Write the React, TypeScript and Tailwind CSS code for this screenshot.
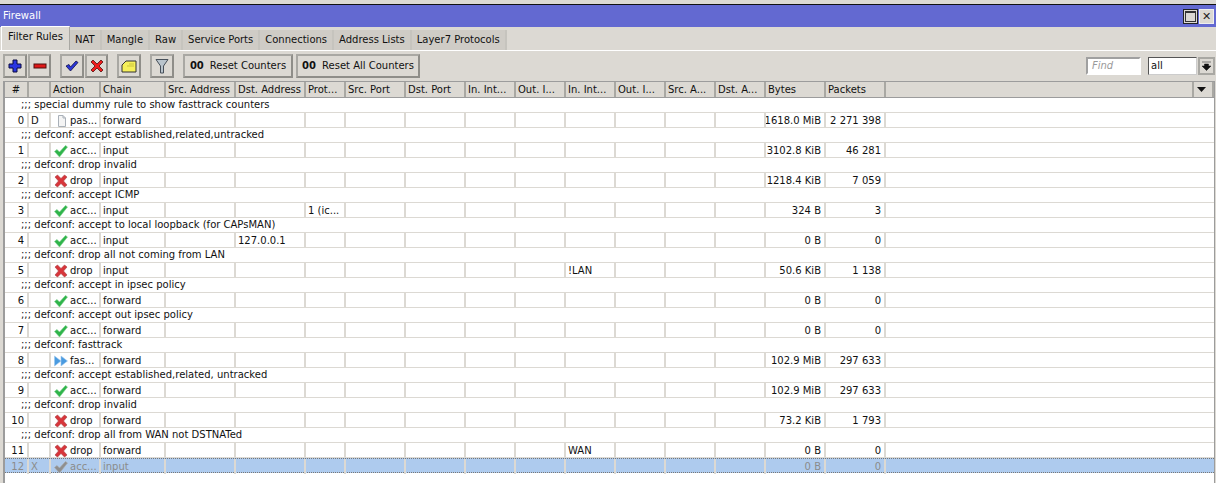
import type { ReactNode } from 'react';

const cols = 'grid grid-cols-[24px_22px_50px_65px_70px_70px_40px_60px_60px_50px_50px_50px_50px_50px_50px_60px_60px_1fr]';

const Accept = ({ gray }: { gray?: boolean }) => (
  <svg width="16" height="14" viewBox="0 0 16 14" className="shrink-0">
    <path d="M1.5 7.5 L4 5.5 L6.5 8 L12.5 1.5 L14.5 3 L6.5 13 Z" fill={gray ? '#8f8f8f' : '#2fb44a'} stroke={gray ? '#a8a8a8' : '#7ccf8a'} strokeWidth="0.6" />
  </svg>
);

const Drop = () => (
  <svg width="16" height="14" viewBox="0 0 16 14" className="shrink-0">
    <path d="M2 3 L4.5 1 L8 4.5 L11.5 1 L14 3 L10.5 7 L14 11 L11.5 13 L8 9.5 L4.5 13 L2 11 L5.5 7 Z" fill="#d8353a" stroke="#a83a3e" strokeWidth="0.6" />
  </svg>
);

const Passthrough = () => (
  <svg width="16" height="14" viewBox="0 0 16 14" className="shrink-0">
    <path d="M5.5 1.5 H10 L12.5 4 V12.5 H5.5 Z" fill="#f4f4f4" stroke="#a9b0b8" />
    <path d="M10 1.5 V4 H12.5" fill="none" stroke="#a9b0b8" />
  </svg>
);

const FastTrack = () => (
  <svg width="16" height="14" viewBox="0 0 16 14" className="shrink-0">
    <path d="M1.5 2 L8 7 L1.5 12 Z" fill="#4a9be0" stroke="#9cc8ee" strokeWidth="0.6" />
    <path d="M8 2 L14.5 7 L8 12 Z" fill="#4a9be0" stroke="#9cc8ee" strokeWidth="0.6" />
  </svg>
);

type Rule = {
  comment: string;
  id: number;
  flag?: string;
  icon: ReactNode;
  action: string;
  chain: string;
  dst?: string;
  proto?: string;
  inIf?: string;
  bytes: string;
  packets: string;
};

const rules: Rule[] = [
  { comment: 'special dummy rule to show fasttrack counters', id: 0, flag: 'D', icon: <Passthrough />, action: 'pas...', chain: 'forward', bytes: '1618.0 MiB', packets: '2 271 398' },
  { comment: 'defconf: accept established,related,untracked', id: 1, icon: <Accept />, action: 'acc...', chain: 'input', bytes: '3102.8 KiB', packets: '46 281' },
  { comment: 'defconf: drop invalid', id: 2, icon: <Drop />, action: 'drop', chain: 'input', bytes: '1218.4 KiB', packets: '7 059' },
  { comment: 'defconf: accept ICMP', id: 3, icon: <Accept />, action: 'acc...', chain: 'input', proto: '1 (ic...', bytes: '324 B', packets: '3' },
  { comment: 'defconf: accept to local loopback (for CAPsMAN)', id: 4, icon: <Accept />, action: 'acc...', chain: 'input', dst: '127.0.0.1', bytes: '0 B', packets: '0' },
  { comment: 'defconf: drop all not coming from LAN', id: 5, icon: <Drop />, action: 'drop', chain: 'input', inIf: '!LAN', bytes: '50.6 KiB', packets: '1 138' },
  { comment: 'defconf: accept in ipsec policy', id: 6, icon: <Accept />, action: 'acc...', chain: 'forward', bytes: '0 B', packets: '0' },
  { comment: 'defconf: accept out ipsec policy', id: 7, icon: <Accept />, action: 'acc...', chain: 'forward', bytes: '0 B', packets: '0' },
  { comment: 'defconf: fasttrack', id: 8, icon: <FastTrack />, action: 'fas...', chain: 'forward', bytes: '102.9 MiB', packets: '297 633' },
  { comment: 'defconf: accept established,related, untracked', id: 9, icon: <Accept />, action: 'acc...', chain: 'forward', bytes: '102.9 MiB', packets: '297 633' },
  { comment: 'defconf: drop invalid', id: 10, icon: <Drop />, action: 'drop', chain: 'forward', bytes: '73.2 KiB', packets: '1 793' },
  { comment: 'defconf: drop all from WAN not DSTNATed', id: 11, icon: <Drop />, action: 'drop', chain: 'forward', inIf: 'WAN', bytes: '0 B', packets: '0' },
];

const headers = ['#', '', 'Action', 'Chain', 'Src. Address', 'Dst. Address', 'Prot...', 'Src. Port', 'Dst. Port', 'In. Int...', 'Out. I...', 'In. Int...', 'Out. I...', 'Src. A...', 'Dst. A...', 'Bytes', 'Packets', ''];

const tabs = ['NAT', 'Mangle', 'Raw', 'Service Ports', 'Connections', 'Address Lists', 'Layer7 Protocols'];

const ToolButton = ({ children, className }: { children: ReactNode; className?: string }) => (
  <div className={`flex h-[24px] items-center justify-center border-2 border-[#a9a8a3] border-r-[#8f8e89] border-b-[#8f8e89] ${className ?? ''}`}>{children}</div>
);

const Cell = ({ children, right, className }: { children?: ReactNode; right?: boolean; className?: string }) => (
  <div className={`flex h-[15px] items-center overflow-hidden whitespace-nowrap border-r-2 border-[#dcd9d3] px-[2px] ${right ? 'justify-end pr-[3px]' : ''} ${className ?? ''}`}>{children}</div>
);

const RuleCells = ({ id, flag, icon, action, chain, dst, proto, inIf, bytes, packets }: Omit<Rule, 'comment'>) => (
  <>
    <Cell right>{id}</Cell>
    <Cell>{flag}</Cell>
    <Cell className="gap-[1px] pl-[2px]">{icon}{action}</Cell>
    <Cell>{chain}</Cell>
    <Cell />
    <Cell>{dst}</Cell>
    <Cell>{proto}</Cell>
    <Cell />
    <Cell />
    <Cell />
    <Cell />
    <Cell>{inIf}</Cell>
    <Cell />
    <Cell />
    <Cell />
    <Cell right>{bytes}</Cell>
    <Cell right>{packets}</Cell>
    <div />
  </>
);

export default function App() {
  return (
    <div className="h-[483px] w-[1216px] overflow-hidden bg-[#dcd9d3] font-['DejaVu_Sans',sans-serif] text-[10px] leading-none text-[#111]">
      <div className="h-[4px] border-b border-[#111] bg-[#dcd9d3] box-content" />

      {/* title bar */}
      <div className="flex h-[22px] items-center justify-between bg-[#6369d1] pl-[3px] pr-[2px] text-white">
        <span>Firewall</span>
        <div className="flex gap-[1px]">
          <div className="flex h-[15px] w-[15px] items-center justify-center border border-[#222] bg-[#dcd9d3]">
            <div className="h-[11px] w-[11px] border border-[#333] border-t-2" />
          </div>
          <div className="flex h-[15px] w-[15px] items-center justify-center border border-[#eee] bg-[#dcd9d3] text-[11px] font-bold text-[#222]">✕</div>
        </div>
      </div>

      {/* tabs */}
      <div className="flex h-[24px] items-end border-b border-white pl-[1px]">
        <div className="flex h-[24px] w-[69px] items-center justify-center border-r border-[#a9a8a3] border-l border-l-white border-t border-t-white pb-[3px]">Filter Rules</div>
        {tabs.map((tab) => (
          <div key={tab} className="flex h-[20px] items-center border-r-2 border-[#c6c4be] bg-[#cfccc6] px-[5px] pb-[1px]">{tab}</div>
        ))}
      </div>

      {/* toolbar */}
      <div className="flex h-[30px] items-center pl-[3px] pr-[1px]">
        <ToolButton className="w-[24px]">
          <svg width="14" height="14" viewBox="0 0 14 14"><path d="M5 1H9V5H13V9H9V13H5V9H1V5H5Z" fill="#2a36e0" stroke="#0b0b40" /></svg>
        </ToolButton>
        <ToolButton className="ml-[1px] w-[23px]">
          <svg width="14" height="6" viewBox="0 0 14 6"><rect x="1" y="1" width="12" height="4" fill="#e01818" stroke="#501010" /></svg>
        </ToolButton>
        <ToolButton className="ml-[9px] w-[24px]">
          <svg width="14" height="12" viewBox="0 0 14 12"><path d="M1 6 L4 4.5 L5.5 7 L11 1 L13 2.5 L5.5 11 Z" fill="#2a36d8" stroke="#10104a" strokeWidth="0.8" /></svg>
        </ToolButton>
        <ToolButton className="ml-[1px] w-[23px]">
          <svg width="14" height="14" viewBox="0 0 14 14"><path d="M1 3 L3 1 L7 5 L11 1 L13 3 L9 7 L13 11 L11 13 L7 9 L3 13 L1 11 L5 7 Z" fill="#ee1c1c" stroke="#501010" strokeWidth="0.8" /></svg>
        </ToolButton>
        <ToolButton className="ml-[9px] w-[24px]">
          <svg width="16" height="13" viewBox="0 0 16 13"><path d="M1 5 L5 1 H15 V12 H1 Z" fill="#f6f05a" stroke="#333" /><path d="M8 4H13M6 6H13" stroke="#c9c23c" /></svg>
        </ToolButton>
        <ToolButton className="ml-[9px] w-[24px]">
          <svg width="14" height="16" viewBox="0 0 14 16"><path d="M1 1.5H13L8.5 8V15H5.5V8Z" fill="#b9c4cc" stroke="#47505a" /></svg>
        </ToolButton>
        <ToolButton className="ml-[9px] w-[110px] gap-[6px]"><b>00</b> Reset Counters</ToolButton>
        <ToolButton className="ml-[3px] w-[124px] gap-[6px]"><b>00</b> Reset All Counters</ToolButton>
        <div className="ml-auto flex items-center">
          <div className="flex h-[18px] w-[55px] items-center border-2 border-[#a0a0a0] border-r-white border-b-white bg-white pl-[4px] italic text-[#9a9a9a]">Find</div>
          <div className="ml-[7px] flex h-[18px] w-[49px] items-center border border-[#555] border-r-[#ccc] border-b-[#ccc] bg-white pl-[2px]">all</div>
          <div className="ml-[1px] flex h-[18px] w-[17px] items-center justify-center border-2 border-[#a9a8a3]">
            <svg width="9" height="10" viewBox="0 0 9 10"><path d="M0 1H9M2.5 3H6.5V5H9L4.5 9.5L0 5H2.5Z" fill="#111" stroke="#111" strokeWidth="0.5" /></svg>
          </div>
        </div>
      </div>

      {/* table */}
      <div className="ml-[3px] mr-[1px] border-l-2 border-r border-[#9c9c9c] bg-white h-[402px]">
        <div className={`${cols} h-[17px] border-y border-[#9c9c9c] bg-[#dcd9d3]`}>
          {headers.map((h, i) => (
            <div key={i} className={`flex items-center overflow-hidden whitespace-nowrap border-r-2 border-[#a9a8a3] px-[2px] ${i === 0 ? 'justify-center' : ''} ${i === headers.length - 1 ? 'justify-end border-r-0 pr-[3px]' : ''}`}>
              {i === headers.length - 1 ? (
                <span className="flex h-full w-[17px] items-center justify-center border-l-2 border-[#a9a8a3]">
                  <svg width="9" height="5" viewBox="0 0 9 5"><path d="M0 0H9L4.5 5Z" fill="#111" /></svg>
                </span>
              ) : h}
            </div>
          ))}
        </div>

        {rules.map(({ comment, ...rule }) => (
          <div key={rule.id}>
            <div className="flex h-[15px] items-center border-b border-[#dcd9d3] pl-[16px]">;;; {comment}</div>
            <div className={`${cols} h-[15px] border-b border-[#dcd9d3]`}>
              <RuleCells {...rule} />
            </div>
          </div>
        ))}

        <div className={`${cols} h-[15px] border-y border-dotted border-[#777] bg-[#aecbee] text-[#8b8b8b]`}>
          <RuleCells id={12} flag="X" icon={<Accept gray />} action="acc..." chain="input" bytes="0 B" packets="0" />
        </div>
      </div>
    </div>
  );
}
